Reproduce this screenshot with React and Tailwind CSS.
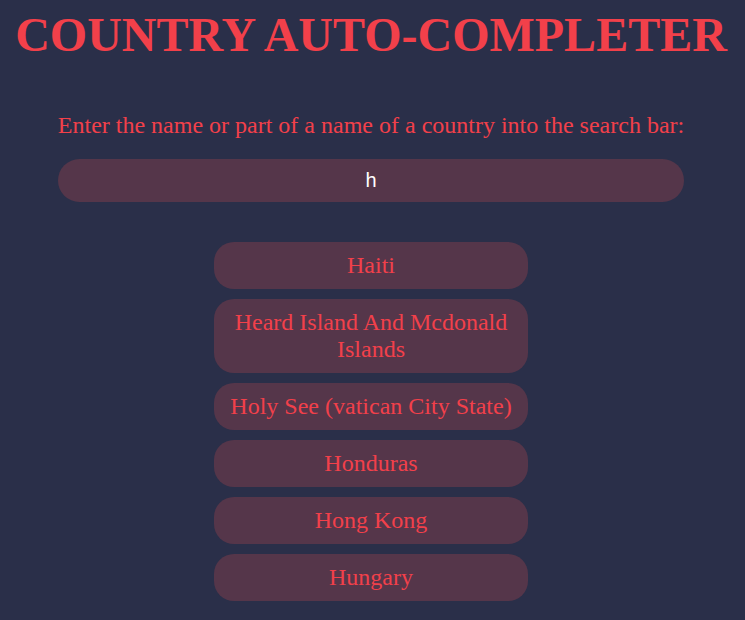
import React, { useState } from 'react';

const countries = [
  'Haiti',
  'Heard Island And Mcdonald Islands',
  'Holy See (vatican City State)',
  'Honduras',
  'Hong Kong',
  'Hungary',
];

const App = () => {
  const [query, setQuery] = useState('h');

  return (
    <div className="min-h-[620px] bg-[#2a2f49] text-[#f2404a] font-['Liberation_Serif',serif] flex flex-col items-center pr-[3px]">
      <h1 className="mt-[5px] text-[48px] leading-[60px] font-bold text-center">COUNTRY AUTO-COMPLETER</h1>
      <p className="mt-[46px] text-[24px] leading-[28px]">Enter the name or part of a name of a country into the search bar:</p>
      <input
        type="text"
        value={query}
        onChange={(e) => setQuery(e.target.value)}
        className="mt-[20px] w-[626px] h-[43px] rounded-full bg-[#55364a] text-white text-center text-[20px] font-['Liberation_Sans',sans-serif] outline-none"
      />
      <ul className="mt-[40px] flex flex-col gap-[10px] w-[314px]">
        {countries.map((c) => (
          <li key={c} className="bg-[#55364a] rounded-[20px] px-4 py-[10px] text-center text-[24px] leading-[27px]">
            {c}
          </li>
        ))}
      </ul>
    </div>
  );
};

export default App;
